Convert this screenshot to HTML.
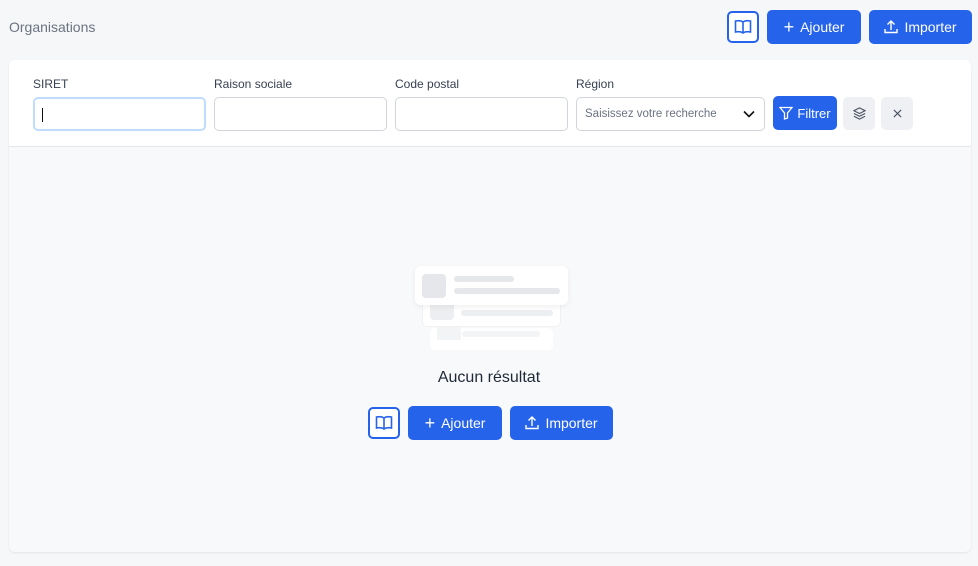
<!DOCTYPE html>
<html><head><style>
*{box-sizing:border-box;margin:0;padding:0}
body{width:978px;height:566px;background:#f6f7f9;font-family:"Liberation Sans",sans-serif;position:relative;overflow:hidden;color:#1f2937}
.abs{position:absolute}
.btn{position:absolute;background:#2563eb;color:#fff;border-radius:5px;font-size:14px;display:flex;align-items:center;justify-content:center;gap:6px}
.ob{position:absolute;border:2px solid #2563eb;background:#fff;border-radius:5px;display:flex;align-items:center;justify-content:center}
.lbl{position:absolute;font-size:12px;color:#374151;top:77px}
.inp{position:absolute;top:97px;height:34px;border:1px solid #d1d5db;border-radius:5px;background:#fff}
.gb{position:absolute;top:97px;width:32px;height:33px;background:#eef0f3;border-radius:5px;display:flex;align-items:center;justify-content:center}
</style></head><body>
<div class="abs" style="left:9px;top:19px;font-size:14px;color:#6b7280">Organisations</div>
<div class="ob" style="left:727px;top:11px;width:32px;height:32px"><svg width="18" height="16" viewBox="0 0 18 16" fill="none" stroke="#2563eb" stroke-width="1.6"><path d="M9 3C7 1.5 4 1.5 1.5 2v11c2.5-.5 5.5-.5 7.5 1 2-1.5 5-1.5 7.5-1V2C14 1.5 11 1.5 9 3zM9 3v11"/></svg></div>
<div class="btn" style="left:767px;top:10px;width:94px;height:34px"><span style="font-size:18px">+</span>Ajouter</div>
<div class="btn" style="left:869px;top:10px;width:103px;height:34px"><svg width="14" height="14" viewBox="0 0 14 14" fill="none" stroke="#fff" stroke-width="1.4"><path d="M7 10V1M3.5 4.5L7 1l3.5 3.5M1 9v3.5h12V9"/></svg>Importer</div>
<div class="abs" style="left:9px;top:60px;width:962px;height:492px;background:#f8f9fb;border-radius:6px;box-shadow:0 1px 2px rgba(0,0,0,.08);overflow:hidden">
<div style="height:87px;background:#fff;border-bottom:1px solid #e5e7eb"></div>
</div>
<div class="lbl" style="left:33px">SIRET</div>
<div class="lbl" style="left:214px">Raison sociale</div>
<div class="lbl" style="left:395px">Code postal</div>
<div class="lbl" style="left:576px">Région</div>
<div class="inp" style="left:33px;width:173px;border:2px solid #bfdbfe"><div class="abs" style="left:7px;top:9px;width:1px;height:14px;background:#111"></div></div>
<div class="inp" style="left:214px;width:173px"></div>
<div class="inp" style="left:395px;width:173px"></div>
<div class="inp" style="left:576px;width:189px;font-size:11.5px;color:#6b7280;padding:10px 8px">Saisissez votre recherche<svg class="abs" style="right:9px;top:12px" width="12" height="8" viewBox="0 0 12 8" fill="none" stroke="#111" stroke-width="1.6"><path d="M1 1.5l5 5 5-5"/></svg></div>
<div class="btn" style="left:773px;top:96px;width:64px;height:34px;font-size:13px;gap:4px"><svg width="14" height="14" viewBox="0 0 14 14" fill="none" stroke="#fff" stroke-width="1.3"><path d="M1 1.5h12L8.5 7v5L5.5 13V7z"/></svg>Filtrer</div>
<div class="gb" style="left:843px"><svg width="13" height="13" viewBox="0 0 14 14" fill="none" stroke="#4b5563" stroke-width="1.2"><path d="M7 1L1 4l6 3 6-3zM1 7l6 3 6-3M1 10l6 3 6-3"/></svg></div>
<div class="gb" style="left:881px"><svg width="9" height="9" viewBox="0 0 10 10" stroke="#4b5563" stroke-width="1.3"><path d="M1 1l8 8M9 1L1 9"/></svg></div>
<div class="abs" style="left:430px;top:328px;width:123px;height:22px;background:#fff;border-radius:5px"><div class="abs" style="left:7px;top:-3px;width:24px;height:15px;background:#f3f4f6"></div><div class="abs" style="left:32px;top:3px;width:78px;height:6px;background:#f3f4f6;border-radius:3px"></div></div>
<div class="abs" style="left:422px;top:300px;width:139px;height:27px;background:#fff;border-radius:5px;border:1px solid #f0f1f3"><div class="abs" style="left:7px;top:0;width:24px;height:19px;background:#eceef1;border-radius:4px"></div><div class="abs" style="left:38px;top:9px;width:92px;height:6px;background:#eceef1;border-radius:3px"></div></div>
<div class="abs" style="left:415px;top:266px;width:153px;height:39px;background:#fff;border-radius:6px;box-shadow:0 2px 6px rgba(0,0,0,.06)"><div class="abs" style="left:7px;top:8px;width:24px;height:24px;background:#e5e7eb;border-radius:4px"></div><div class="abs" style="left:39px;top:10px;width:60px;height:6px;background:#e5e7eb;border-radius:3px"></div><div class="abs" style="left:39px;top:22px;width:106px;height:6px;background:#e5e7eb;border-radius:3px"></div></div>
<div class="abs" style="left:0;width:978px;text-align:center;top:369px;font-size:16px;color:#1f2937">Aucun résultat</div>
<div class="ob" style="left:368px;top:407px;width:32px;height:32px"><svg width="18" height="16" viewBox="0 0 18 16" fill="none" stroke="#2563eb" stroke-width="1.6"><path d="M9 3C7 1.5 4 1.5 1.5 2v11c2.5-.5 5.5-.5 7.5 1 2-1.5 5-1.5 7.5-1V2C14 1.5 11 1.5 9 3zM9 3v11"/></svg></div>
<div class="btn" style="left:408px;top:406px;width:94px;height:34px"><span style="font-size:18px">+</span>Ajouter</div>
<div class="btn" style="left:510px;top:406px;width:103px;height:34px"><svg width="14" height="14" viewBox="0 0 14 14" fill="none" stroke="#fff" stroke-width="1.4"><path d="M7 10V1M3.5 4.5L7 1l3.5 3.5M1 9v3.5h12V9"/></svg>Importer</div>
</body></html>
